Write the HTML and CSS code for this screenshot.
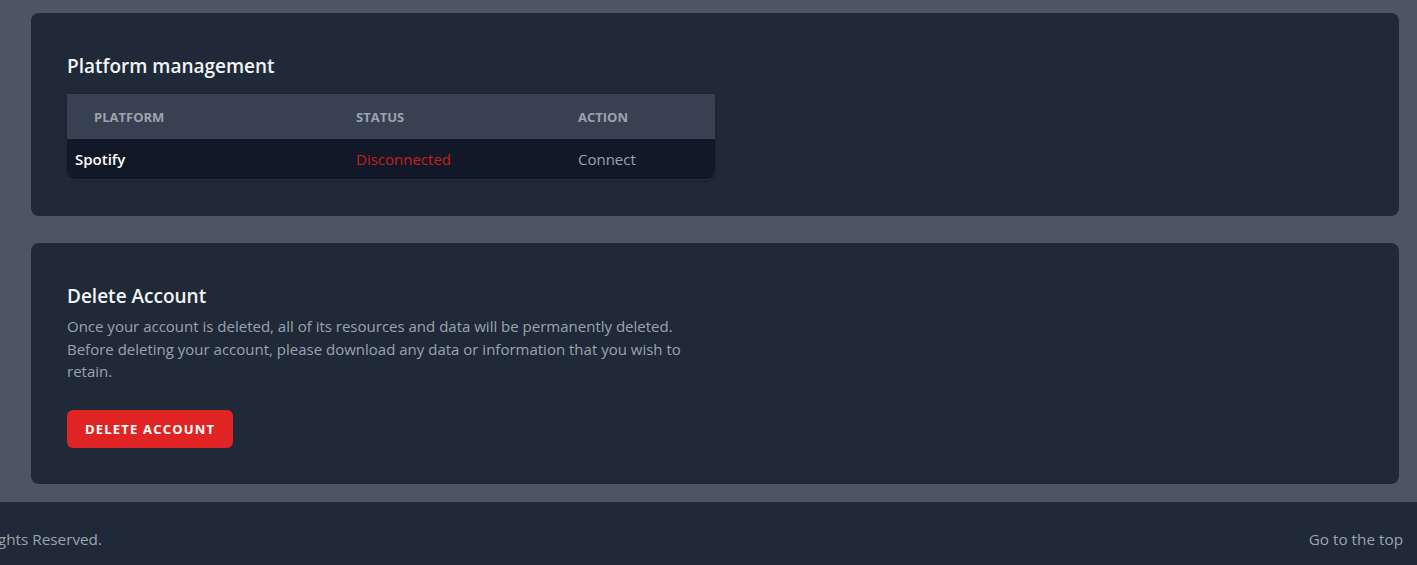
FILE: index.html
```html
<!DOCTYPE html>
<html lang="en">
<head>
<meta charset="utf-8">
<title>Settings</title>
<link rel="stylesheet" href="styles.css">
</head>
<body>
<main class="page">
  <section class="card card-platforms">
    <h2 class="card-title">Platform management</h2>
    <div class="table-wrap">
      <table class="platforms">
        <colgroup>
          <col class="col-platform">
          <col class="col-status">
          <col class="col-action">
        </colgroup>
        <thead>
          <tr>
            <th class="th-platform">Platform</th>
            <th>Status</th>
            <th>Action</th>
          </tr>
        </thead>
        <tbody>
          <tr>
            <td class="td-name">Spotify</td>
            <td class="td-status">Disconnected</td>
            <td class="td-action">Connect</td>
          </tr>
        </tbody>
      </table>
    </div>
  </section>
  <section class="card">
    <h2 class="card-title">Delete Account</h2>
    <p class="card-text">Once your account is deleted, all of its resources and data will be permanently deleted. Before deleting your account, please download any data or information that you wish to retain.</p>
    <button class="btn-danger" type="button">Delete Account</button>
  </section>
</main>
<footer class="footer">
  <div class="footer-left"><span>© 2024 Music Hub. All Rights Reserved.</span></div>
  <a class="footer-link" href="#">Go to the top</a>
</footer>
</body>
</html>
```
FILE: styles.css
```css
* { box-sizing: border-box; }
html, body { margin: 0; }
body {
  background: #4b5563;
  font-family: "Open Sans", "Noto Sans", sans-serif;
  color: #9ca3af;
}
.page {
  padding: 13px 18px 18px 31px;
  display: flex;
  flex-direction: column;
  gap: 27px;
}
.card {
  background: #1f2937;
  border-radius: 8px;
  padding: 39px 36px 36px;
}
.card-platforms { padding-bottom: 37px; }
.card-title {
  margin: 0;
  font-size: 19px;
  line-height: 28px;
  font-weight: 600;
  color: #f3f4f6;
}
.table-wrap {
  margin-top: 14px;
  width: 648px;
  border-radius: 0 0 8px 8px;
  overflow: hidden;
  box-shadow: 0 1px 1px rgba(255,255,255,0.08), 0 1px 3px rgba(0,0,0,0.3);
}
.platforms {
  width: 100%;
  border-collapse: collapse;
  table-layout: fixed;
}
.col-platform { width: 281px; }
.col-status { width: 222px; }
.col-action { width: 145px; }
.platforms thead tr { background: #374151; }
.platforms th {
  height: 45px;
  padding: 0 0 0 8px;
  text-align: left;
  font-size: 13px;
  font-weight: 700;
  text-transform: uppercase;
  color: #9ca3af;
}
.platforms th.th-platform { padding-left: 27px; }
.platforms tbody tr { background: #111827; }
.platforms td {
  height: 40px;
  padding: 0 0 0 8px;
  font-size: 15px;
}
.td-name { color: #ffffff; font-weight: 600; }
.td-status { color: #c81e1e; }
.td-action { color: #9ca3af; }
.card-text {
  margin: 5px 0 0;
  max-width: 640px;
  font-size: 15px;
  line-height: 22.5px;
  color: #9ca3af;
}
.btn-danger {
  margin-top: 27px;
  display: inline-flex;
  align-items: center;
  height: 38px;
  padding: 0 18px;
  border: 0;
  border-radius: 6px;
  background: #e02424;
  color: #ffffff;
  font-family: inherit;
  font-size: 13px;
  font-weight: 700;
  letter-spacing: 1.2px;
  text-transform: uppercase;
}
.footer {
  background: #1f2937;
  height: 63px;
  display: flex;
  align-items: center;
  justify-content: space-between;
  padding: 12px 14px 0 0;
  font-size: 15.3px;
}
.footer-left {
  width: 104px;
  display: flex;
  justify-content: flex-end;
  white-space: nowrap;
}
.footer-left span { padding-right: 2px; }
.footer-link {
  color: #9ca3af;
  text-decoration: none;
}
```
